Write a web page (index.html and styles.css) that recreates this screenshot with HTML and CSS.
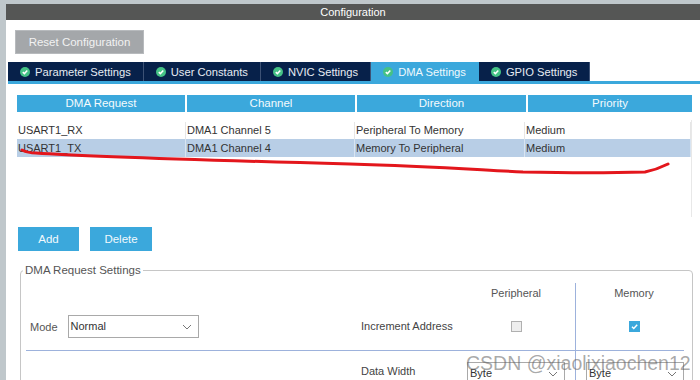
FILE: index.html
```html
<!DOCTYPE html>
<html lang="en">
<head>
    <meta charset="UTF-8">
    <meta name="viewport" content="width=device-width, initial-scale=1.0">
    <title>Configuration - DMA Settings</title>
    <link rel="stylesheet" href="styles.css">
</head>
<body>
    <div class="window">
        <div class="title">Configuration</div>

        <div class="toolbar">
            <button class="btn-reset">Reset Configuration</button>
        </div>

        <div class="tabs">
            <div class="tab"><svg class="ok" viewBox="0 0 10 10"><circle cx="5" cy="5" r="5"/><path d="M2.8 5.1 4.4 6.6 7.3 3.6"/></svg>Parameter Settings</div>
            <div class="tab"><svg class="ok" viewBox="0 0 10 10"><circle cx="5" cy="5" r="5"/><path d="M2.8 5.1 4.4 6.6 7.3 3.6"/></svg>User Constants</div>
            <div class="tab"><svg class="ok" viewBox="0 0 10 10"><circle cx="5" cy="5" r="5"/><path d="M2.8 5.1 4.4 6.6 7.3 3.6"/></svg>NVIC Settings</div>
            <div class="tab active"><svg class="ok" viewBox="0 0 10 10"><circle cx="5" cy="5" r="5"/><path d="M2.8 5.1 4.4 6.6 7.3 3.6"/></svg>DMA Settings</div>
            <div class="tab"><svg class="ok" viewBox="0 0 10 10"><circle cx="5" cy="5" r="5"/><path d="M2.8 5.1 4.4 6.6 7.3 3.6"/></svg>GPIO Settings</div>
        </div>

        <div class="dma-table">
            <div class="thead">
                <div>DMA Request</div>
                <div>Channel</div>
                <div>Direction</div>
                <div>Priority</div>
            </div>
            <div class="tbody">
                <div class="row">
                    <div>USART1_RX</div>
                    <div>DMA1 Channel 5</div>
                    <div>Peripheral To Memory</div>
                    <div>Medium</div>
                </div>
                <div class="row selected">
                    <div>USART1_TX</div>
                    <div>DMA1 Channel 4</div>
                    <div>Memory To Peripheral</div>
                    <div>Medium</div>
                </div>
            </div>
        </div>

        <div class="actions">
            <button class="btn">Add</button>
            <button class="btn">Delete</button>
        </div>

        <fieldset class="req-settings">
            <legend>DMA Request Settings</legend>
            <div class="req-grid">
                <div></div>
                <div></div>
                <div class="col-head">Peripheral</div>
                <div class="col-head mem">Memory</div>

                <div class="mode-cell">
                    <span>Mode</span>
                    <div class="select mode">Normal<svg class="chev" viewBox="0 0 10 6"><path d="M1 1 5 5 9 1"/></svg></div>
                </div>
                <div class="label">Increment Address</div>
                <div class="cell"><span class="check"></span></div>
                <div class="cell mem"><span class="check on"><svg viewBox="0 0 10 10"><path d="M2.2 5.2 4.2 7.2 8 3"/></svg></span></div>

                <div class="divider"></div>

                <div></div>
                <div class="label low">Data Width</div>
                <div class="cell low"><div class="select byte">Byte<svg class="chev" viewBox="0 0 10 6"><path d="M1 1 5 5 9 1"/></svg></div></div>
                <div class="cell mem low"><div class="select byte">Byte<svg class="chev" viewBox="0 0 10 6"><path d="M1 1 5 5 9 1"/></svg></div></div>
            </div>
        </fieldset>
    </div>

    <!-- overlays on top of the screenshot -->
    <div class="watermark">CSDN @xiaolixiaochen12</div>
    <svg class="scribble" viewBox="0 0 700 380">
        <path d="M22 150 C26 152 30 153 36 153 C90 157 200 160 350 164 C430 166 480 170 523 172 C570 173 610 173 645 172 C655 170 662 167 668 164"/>
    </svg>
</body>
</html>
```

FILE: styles.css
```css
body {
    margin: 0;
    background: #bfc7cb;
    font-family: "Liberation Sans", Arial, sans-serif;
    font-size: 11px;
    color: #333;
    position: relative;
    height: 380px;
    overflow: hidden;
}

.window {
    margin: 4px 0 0 6px;
    height: 376px;
    background: #fff;
    overflow: hidden;
}

.title {
    height: 16px;
    line-height: 16px;
    background: #555655;
    color: #fff;
    text-align: center;
}

.toolbar {
    padding: 10px 0 0 9px;
}

.btn-reset {
    width: 129px;
    height: 24px;
    border: 1px solid #b7babd;
    background: #a4a7aa;
    color: #f2f2f2;
    font: inherit;
    font-size: 11.5px;
    padding: 0;
}

.tabs {
    display: flex;
    margin: 8px 0 0 2px;
    height: 19px;
    border-bottom: 3px solid #3ba8dc;
}

.tab {
    display: flex;
    align-items: center;
    gap: 5px;
    padding: 0 12px;
    background: #07214a;
    color: #e6ebf2;
    border-right: 1px solid #3d5275;
    font-size: 11.2px;
}

.tab.active {
    background: #3ba8dc;
    color: #eef8fd;
    border-right-color: #3ba8dc;
}

.ok {
    width: 10px;
    height: 10px;
}

.ok circle {
    fill: #45c286;
}

.ok path {
    fill: none;
    stroke: #fff;
    stroke-width: 1.5;
}

.dma-table {
    margin: 11px 8px 0 11px;
}

.thead {
    display: grid;
    grid-template-columns: 168px 168px 169px 1fr;
    column-gap: 2px;
    height: 17px;
}

.thead div {
    background: #3ba8dc;
    color: #f4fafd;
    text-align: center;
    line-height: 17px;
    font-size: 11.5px;
}

.tbody {
    margin-top: 8px;
    padding-top: 2px;
    height: 95px;
    border-right: 1px solid #e8e8e8;
}

.row {
    display: grid;
    grid-template-columns: 169px 169px 170px 1fr;
    height: 17px;
    line-height: 17px;
}

.row div {
    padding-left: 1px;
    border-right: 1px solid #e6e6e6;
}

.row.selected {
    height: 18px;
    line-height: 18px;
    background: #b8cee6;
}

.row.selected div {
    border-right-color: #d8e4f1;
}

.actions {
    display: flex;
    gap: 11px;
    margin: 10px 0 0 12px;
}

.btn {
    height: 24px;
    padding: 0;
    border: none;
    background: #3ba8dc;
    color: #f2f9fd;
    font: inherit;
    font-size: 11.5px;
    width: 61px;
}

.btn + .btn {
    width: 62px;
}

.req-settings {
    margin: 12px 7px 0 14px;
    padding: 0;
    border: 1px solid #c6c6c6;
    border-radius: 4px;
    min-width: 0;
}

.req-settings legend {
    margin-left: 2px;
    padding: 0 2px;
    line-height: 14px;
    color: #555;
    font-size: 11.5px;
}

.req-grid {
    display: grid;
    grid-template-columns: 334px 102px 118px 1fr;
    grid-template-rows: 20px 47px 1px 40px;
    margin-top: 6px;
}

.col-head {
    text-align: center;
    line-height: 20px;
    color: #555;
}

.mem {
    border-left: 1px solid #9db2dc;
}

.mode-cell {
    display: flex;
    align-items: center;
    gap: 10px;
    padding-left: 9px;
    color: #555;
}

.label {
    display: flex;
    align-items: center;
    padding: 0 0 2px 6px;
    color: #444;
}

.label.low {
    align-items: flex-start;
    padding-top: 14px;
}

.cell {
    display: flex;
    align-items: center;
    justify-content: center;
}

.cell.low {
    align-items: flex-start;
    justify-content: flex-start;
    padding: 11px 0 0 10px;
}

.select {
    position: relative;
    box-sizing: border-box;
    height: 23px;
    line-height: 21px;
    border: 1px solid #a9a9a9;
    padding-left: 2px;
    background: #fff;
    color: #333;
}

.select.mode {
    width: 131px;
}

.select.byte {
    width: 98px;
}

.chev {
    position: absolute;
    right: 6px;
    top: 8px;
    width: 10px;
    height: 6px;
}

.chev path {
    fill: none;
    stroke: #777;
    stroke-width: 1;
}

.check {
    box-sizing: border-box;
    width: 11px;
    height: 11px;
    border: 1px solid #b0b0b0;
    background: #eeeeee;
}

.check.on {
    border-color: #3ba8dc;
    background: #3ba8dc;
    display: flex;
}

.check.on svg {
    width: 9px;
    height: 9px;
}

.check.on path {
    fill: none;
    stroke: #fff;
    stroke-width: 1.6;
}

.divider {
    grid-column: 1 / -1;
    margin: 0 8px 0 5px;
    background: #9db2dc;
}

.watermark {
    position: absolute;
    left: 466px;
    top: 352px;
    font-size: 19.5px;
    line-height: 22px;
    color: rgba(95, 95, 95, 0.55);
}

.scribble {
    position: absolute;
    left: 0;
    top: 0;
    width: 700px;
    height: 380px;
    pointer-events: none;
}

.scribble path {
    fill: none;
    stroke: #e3161c;
    stroke-width: 3;
    stroke-linecap: round;
}
```
